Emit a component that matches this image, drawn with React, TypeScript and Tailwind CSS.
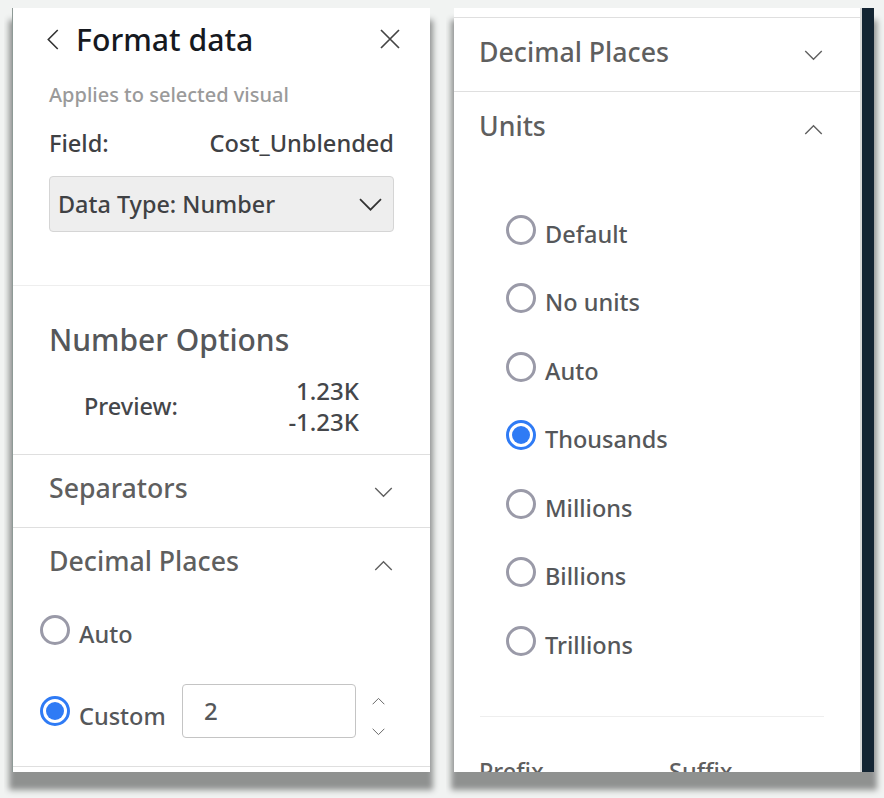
import React from "react";

const font = "font-['Noto_Sans','Open_Sans',sans-serif] font-medium";

function Chevron({ up, className }: { up?: boolean; className: string }) {
  return (
    <svg viewBox="0 0 20 12" className={className} fill="none" stroke="currentColor" strokeWidth="1.5">
      <path d={up ? "M1 11 L10 2 L19 11" : "M1 1 L10 10 L19 1"} />
    </svg>
  );
}

function Radio({ on }: { on?: boolean }) {
  return on ? (
    <span className="w-[30px] h-[30px] rounded-full border-[3px] border-[#2f7bf5] bg-white p-[3px] block shrink-0">
      <span className="block w-full h-full rounded-full bg-[#2f7bf5]" />
    </span>
  ) : (
    <span className="w-[30px] h-[30px] rounded-full border-[3px] border-[#9a9aa8] bg-white block shrink-0" />
  );
}

function SectionHead({ title, up, h, top }: { title: string; up?: boolean; h: string; top: string }) {
  return (
    <div className={`flex items-start justify-between ${h}`}>
      <span className={`text-[26.7px] leading-[36px] text-[#5f5f5f] ${top}`}>{title}</span>
      <Chevron up={up} className="w-[19px] h-[11px] text-[#5f5f5f] mt-[32px]" />
    </div>
  );
}

export default function App() {
  const units = ["Default", "No units", "Auto", "Thousands", "Millions", "Billions", "Trillions"];
  return (
    <div className={`${font} w-[884px] h-[798px] bg-[#f1f3f2] overflow-hidden flex pt-[8px]`}>
      <div className="ml-[12px] w-[418px] h-[764px] bg-white shadow-[0_15px_6px_3px_#8f9190] [clip-path:inset(0_-12px_-30px_-8px)] border-l-[1.5px] border-l-[#8e9a96] overflow-hidden">
        <div className="flex items-center justify-between pl-[29px] pr-[30px] pt-[10px] h-[52px]">
          <div className="flex items-center gap-[13px]">
            <Chevron up className="w-[21px] h-[15px] -rotate-90 text-[#333]" />
            <span className="text-[30.2px] leading-[40px] text-[#16191f] pt-[1px]">Format data</span>
          </div>
          <svg viewBox="0 0 20 20" className="w-[20px] h-[20px] text-[#444]" fill="none" stroke="currentColor" strokeWidth="1.7">
            <path d="M1 1 L19 19 M19 1 L1 19" />
          </svg>
        </div>
        <div className="pl-[36px] pr-[36px] text-[20px] leading-[28px] text-[#9a9a9a] mt-[21px]">Applies to selected visual</div>
        <div className="pl-[36px] pr-[36px] mt-[19px] flex justify-between text-[23.6px] leading-[30px] text-[#3f4144]">
          <span>Field:</span>
          <span>Cost_Unblended</span>
        </div>
        <div className="ml-[36px] mr-[36px] mt-[18px] h-[56px] rounded-[4px] border border-[#d5d5d5] bg-[#eeeeee] flex items-center justify-between pl-[8px] pr-[10px] pt-[1px] text-[23.4px] text-[#3f4144]">
          <span>Data Type: Number</span>
          <Chevron className="w-[25px] h-[14px] text-[#333]" />
        </div>
        <div className="mt-[53px] border-t border-[#eeeeee] pl-[36px] pr-[36px]">
          <div className="text-[30px] leading-[40px] text-[#55575a] mt-[34px]">Number Options</div>
          <div className="flex items-center justify-between pl-[35px] pr-[35px] mt-[15px] text-[24px] leading-[31px] text-[#44464a]">
            <span className="text-[23.5px]">Preview:</span>
            <span className="text-right">
              <span className="block">1.23K</span>
              <span className="block">-1.23K</span>
            </span>
          </div>
        </div>
        <div className="mt-[17px] border-t-[1.5px] border-[#dfdfdf] pl-[36px] pr-[37px]">
          <SectionHead title="Separators" h="h-[72px]" top="pt-[15px]" />
        </div>
        <div className="border-t-[1.5px] border-[#dfdfdf]">
          <div className="pl-[36px] pr-[37px]">
            <SectionHead title="Decimal Places" up h="h-[72px]" top="pt-[15px]" />
          </div>
          <div className="pl-[27px] flex items-center gap-[9px] text-[23.5px] text-[#55575a] h-[30px] mt-[15px]">
            <Radio />
            <span className="mt-[9px]">Auto</span>
          </div>
          <div className="pl-[27px] flex items-center text-[23.5px] text-[#55575a] mt-[39px] h-[54px]">
            <Radio on />
            <span className="ml-[9px] mt-[11px] w-[93px]">Custom</span>
            <div className="ml-[10px] w-[174px] h-[54px] rounded-[4px] border border-[#c4c4c4] flex items-center pl-[21px] text-[24px] text-[#55575a]">2</div>
            <div className="ml-[16px] mt-[10px] flex flex-col gap-[23px]">
              <Chevron up className="w-[13px] h-[8px] text-[#666]" />
              <Chevron className="w-[13px] h-[8px] text-[#666]" />
            </div>
          </div>
        </div>
        <div className="mt-[28px] border-t-[1.5px] border-[#dfdfdf]" />
      </div>

      <div className="ml-[24px] w-[420px] h-[764px] bg-white shadow-[0_15px_6px_3px_#8f9190] [clip-path:inset(0_-12px_-30px_-8px)] overflow-hidden flex">
        <div className="w-[408px] border-r-2 border-r-[#d9d9d9]">
          <div className="h-[9px] border-b-[1.5px] border-[#dfdfdf] box-content" />
          <div className="pl-[25px] pr-[37px] border-b-[1.5px] border-[#dfdfdf]">
            <SectionHead title="Decimal Places" h="h-[73px]" top="pt-[16px]" />
          </div>
          <div className="pl-[25px] pr-[37px]">
            <SectionHead title="Units" up h="h-[72px]" top="pt-[16px]" />
          </div>
          <div className="pl-[52px] flex flex-col gap-[38.5px] mt-[50.5px] text-[23.5px] text-[#55575a]">
            {units.map((u, i) => (
              <div key={u} className="flex items-center gap-[9px] h-[30px]">
                <Radio on={i === 3} />
                <span className="mt-[10px]">{u}</span>
              </div>
            ))}
          </div>
          <div className="ml-[26px] mr-[36px] mt-[60px] border-t border-[#eeeeee]" />
          <div className="pl-[25px] flex mt-[39px] text-[23.5px] leading-[30px] text-[#5f5f5f]">
            <span className="w-[190px]">Prefix</span>
            <span>Suffix</span>
          </div>
        </div>
        <div className="w-[12px] bg-[#142533]" />
      </div>
    </div>
  );
}
